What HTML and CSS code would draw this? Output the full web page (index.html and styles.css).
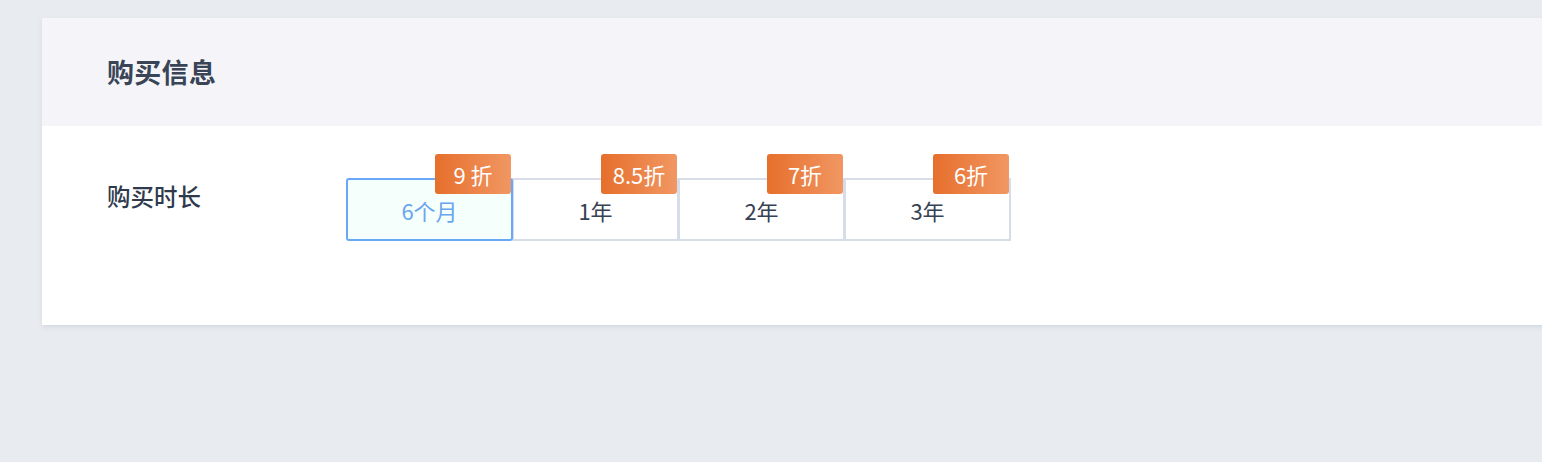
FILE: index.html
```html
<!DOCTYPE html>
<html lang="zh">
<head>
<meta charset="utf-8">
<link rel="stylesheet" href="styles.css">
</head>
<body>
<div class="card">
  <div class="card-header">
    <h2 class="card-title">购买信息</h2>
  </div>
  <div class="card-body">
    <div class="form-row">
      <div class="form-label">购买时长</div>
      <div class="options">
        <div class="option selected"><span class="badge">9 折</span>6个月</div>
        <div class="option"><span class="badge">8.5折</span>1年</div>
        <div class="option"><span class="badge">7折</span>2年</div>
        <div class="option"><span class="badge">6折</span>3年</div>
      </div>
    </div>
  </div>
</div>
</body>
</html>
```
FILE: styles.css
```css
html, body {
  margin: 0;
  padding: 0;
}
body {
  background: #e8ecf0;
  font-family: "Noto Sans CJK SC", "Noto Sans", sans-serif;
  overflow: hidden;
  height: 462px;
}
.card {
  margin: 18px -40px 0 42px;
  background: #ffffff;
  box-shadow: 0 2px 4px rgba(150, 165, 180, 0.25);
}
.card-header {
  background: #f5f5f9;
  height: 108px;
  display: flex;
  align-items: center;
  padding-left: 65px;
}
.card-title {
  margin: 0;
  font-size: 27px;
  font-weight: 700;
  color: #394457;
  letter-spacing: 0.3px;
  margin-top: -2px;
}
.card-body {
  height: 199px;
  box-sizing: border-box;
  padding: 28px 0 0 65px;
}
.form-row {
  display: flex;
}
.form-label {
  width: 239px;
  flex: none;
  font-size: 23.5px;
  font-weight: 500;
  color: #2f3a4c;
  line-height: 30px;
  margin-top: 27px;
}
.options {
  display: flex;
  padding-top: 24px;
}
.option {
  position: relative;
  width: 167px;
  height: 63px;
  box-sizing: border-box;
  border: 2px solid #d6dce8;
  margin-left: -1px;
  display: flex;
  align-items: center;
  justify-content: center;
  font-size: 22px;
  color: #364154;
  background: #ffffff;
  padding-top: 1px;
}
.option:first-child {
  margin-left: 0;
}
.option.selected {
  border-color: #68a8f6;
  background: #f5fffb;
  color: #6aa5ef;
  border-radius: 3px;
  z-index: 1;
}
.badge {
  position: absolute;
  top: -26px;
  right: 0;
  width: 76px;
  height: 40px;
  border-radius: 3px;
  background: linear-gradient(90deg, #e66f2c 0%, #f19763 100%);
  color: #ffffff;
  font-size: 22px;
  display: flex;
  align-items: center;
  justify-content: center;
  z-index: 2;
}
```
